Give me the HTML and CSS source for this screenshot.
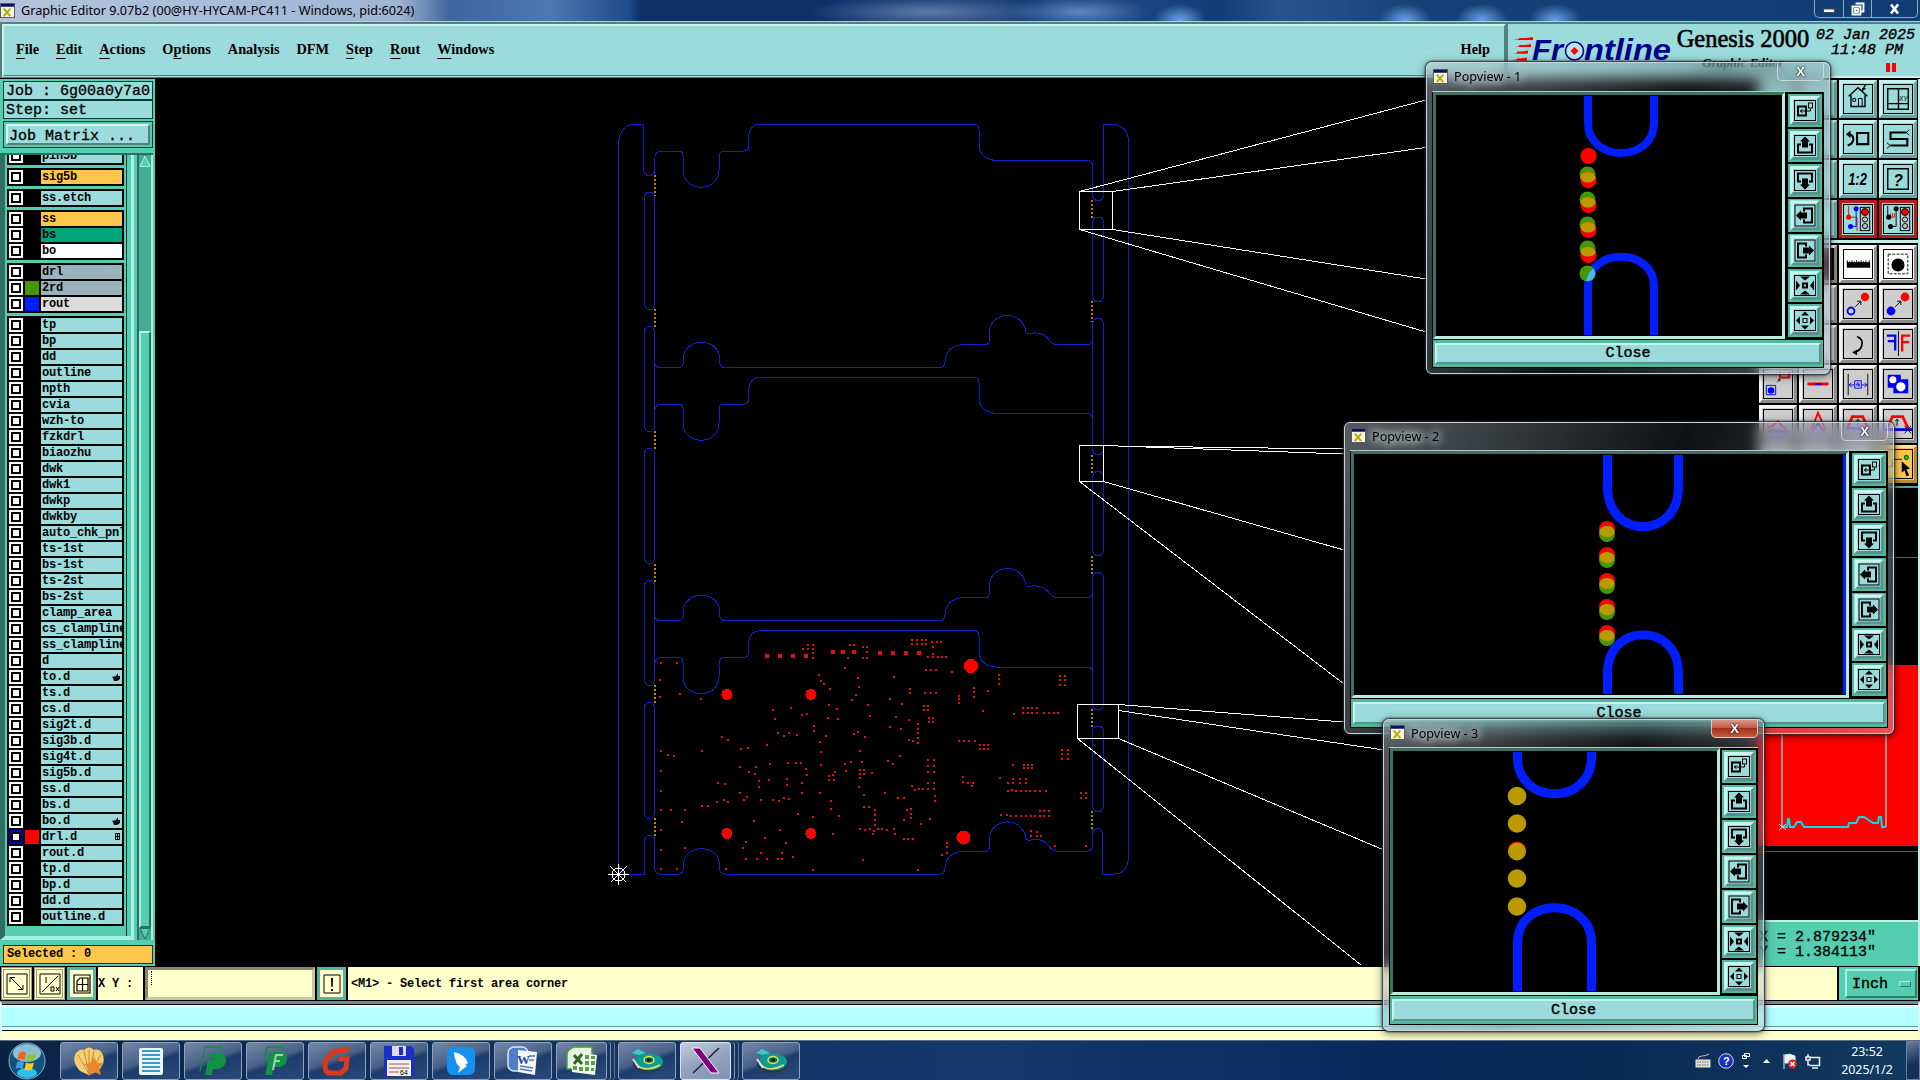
FILE: index.html
```html
<!DOCTYPE html>
<html lang="en">
<head>
  <meta charset="UTF-8">
  <title>Graphic Editor</title>
  <link rel="stylesheet" href="styles.css">
</head>
<body>

  <!-- shared icons -->
  <svg class="defs">
    <symbol id="win-icon" viewBox="0 0 16 16">
      <rect x=".5" y=".5" width="15" height="15" fill="#f4f4e8" stroke="#555"/>
      <rect x="1" y="1" width="14" height="3" fill="#101060"/>
      <path d="M4 6l7 8M11 6l-7 8" stroke="#b5b000" stroke-width="2.2"/>
    </symbol>
    <symbol id="pv-copy" viewBox="0 0 20 20">
      <rect x="3" y="6" width="8" height="9" fill="none" stroke="#000" stroke-width="2"/>
      <rect x="13.5" y="2.5" width="4" height="5" fill="none" stroke="#000"/>
      <path d="M15.5 8v2.500H5M7.500 8.500l-2 2 2 2" fill="none" stroke="#000"/>
    </symbol>
    <symbol id="pv-pan" viewBox="0 0 20 20">
      <path d="M6 9H3v8h14V9h-3" fill="none" stroke="#000" stroke-width="2"/>
      <path d="M10 1l5 5h-2v6H7V6H5z"/>
    </symbol>
    <symbol id="pv-in" viewBox="0 0 20 20">
      <rect x="8" y="8" width="4" height="4" fill="none" stroke="#000" stroke-width="2"/>
      <path d="M5 1h10l-5 4zM5 19h10l-5-4zM1 5v10l4-5zM19 5v10l-4-5z"/>
    </symbol>
    <symbol id="pv-out" viewBox="0 0 20 20">
      <rect x="8" y="8" width="4" height="4" fill="none" stroke="#000"/>
      <path d="M10 1l4 4H6zM10 19l4-4H6zM1 10l4-4v8zM19 10l-4-4v8z"/>
    </symbol>
    <symbol id="disc" viewBox="0 0 34 26">
      <ellipse cx="18" cy="16" rx="15" ry="9" fill="#2c3550"/>
      <ellipse cx="19" cy="14" rx="14" ry="8.500" fill="#0b9c94"/>
      <path d="M6 16q8 9 24 1" fill="none" stroke="#e4e06a" stroke-width="1.500"/>
      <path d="M3 11l6 9" stroke="#ddd" stroke-width="2"/>
      <ellipse cx="19" cy="12" rx="5" ry="3.500" fill="#087070" stroke="#f0e03c" stroke-width="1.500"/>
      <path d="M2 5l6-4 8 4-7 2z" fill="#2fd3c5"/>
      <ellipse cx="19" cy="12" rx="2" ry="1.500" fill="#111"/>
    </symbol>
  </svg>

  <header class="titlebar">
    <svg class="win-icon"><use href="#win-icon"/></svg>
    <span class="title-text">Graphic Editor 9.07b2 (00@HY-HYCAM-PC411 - Windows, pid:6024)</span>
    <div class="win-buttons">
      <span><svg width="14" height="12"><rect x="1.500" y="6" width="11" height="3.500" fill="#fff" stroke="#445"/></svg></span>
      <span><svg width="14" height="14"><path d="M4.500 1.500h8v8h-2M1.500 4.500h8v8h-8z M4 7h3v3h-3z" fill="none" stroke="#fff" stroke-width="1.800"/></svg></span>
      <span class="wide"><svg width="14" height="12"><path d="M3 1.500l7 9M10 1.500l-7 9" stroke="#fff" stroke-width="2.600"/></svg></span>
    </div>
  </header>

  <div class="top">
    <nav class="menubar">
      <span><u>F</u>ile</span>
      <span><u>E</u>dit</span>
      <span><u>A</u>ctions</span>
      <span>O<u>p</u>tions</span>
      <span>Analysis</span>
      <span>DFM</span>
      <span><u>S</u>tep</span>
      <span><u>R</u>out</span>
      <span><u>W</u>indows</span>
      <span class="help">Help</span>
    </nav>
    <div class="brand">
      <svg class="logo" width="164" height="30" viewBox="0 0 164 30">
        <path d="M2 4l20-3-1 3zM4 11l16-3-1 3zM2 17.500l15-3-1 3zM0 24.500l16-3-1 3z" fill="#f00"/>
        <path d="M8 2h14v2H8zM8 9h12v2H8zM6 15.500h11v2H6zM6 22.500h10v2H6z" fill="#f00"/>
        <g class="logo-text">
          <text x="21" y="24" textLength="31" lengthAdjust="spacingAndGlyphs">Fr</text>
          <text x="73" y="24" textLength="87" lengthAdjust="spacingAndGlyphs">ntline</text>
        </g>
        <circle cx="63.500" cy="15" r="9" fill="#b8e4e8" stroke="#00008b" stroke-width="1.500"/>
        <path d="M63.500 11l4 4-4 4-4-4z" fill="#f00"/>
      </svg>
      <div class="product">
        <div class="name">Genesis 2000</div>
        <div class="sub">Graphic Editor</div>
      </div>
      <div class="clock">
        <div>02 Jan 2025</div>
        <div>11:48 PM</div>
        <svg width="12" height="9"><path d="M1 0h4v9H1zM7 0h4v9H7z" fill="#f00"/></svg>
      </div>
    </div>
  </div>

  <div class="main">
    <aside class="sidebar">
      <div class="info">Job : 6g00a0y7a0</div>
      <div class="info">Step: set</div>
      <div class="matrix"><button>Job Matrix ...</button></div>
      <div class="layer-box">
        <div class="layers" id="layers"></div>
        <div class="scroll">
          <svg width="12" height="12"><path d="M1 11.500L6 1l5 10.500z" fill="#54cdb0" stroke="#a8efe0"/></svg>
          <div class="trough"><div class="thumb"></div></div>
          <svg width="12" height="12"><path d="M1 .5L6 11 11 .5z" fill="#54cdb0" stroke="#2b6e62"/></svg>
        </div>
      </div>
      <div class="selected">Selected : 0</div>
    </aside>

    <svg class="canvas" viewBox="155 79 1602 887" width="1602" height="887">
      <defs>
        <!-- top and bottom edges of one board -->
        <g id="board">
          <path d="M654.500 175V160Q655 151 661 151H679Q683 151 683 156V170C683 193 719 193 719 170V158Q719 151 724 151H744Q748.500 151 748.500 146V138Q749 124 762 124H974Q979 124 979 130V148Q983 160 996 160.500H1088Q1092.500 161 1092.500 166V197"/>
          <path d="M654.500 330V361Q655 367.500 660 367.500H679Q683 367.500 683.500 361V358C684 337 719 337 719.500 358V362Q720 367.500 725 367.500H940Q944 367.500 945 362Q946 345 965 344.500H986Q989 344.500 989.500 340V332C990 312 1022 308 1026 332Q1028 335 1033 333Q1044 332 1050 341Q1053 344.500 1056 344.500H1088Q1092.500 344 1092.500 338V322"/>
        </g>
      </defs>
      <g class="rout">
        <use href="#board"/>
        <use href="#board" y="253"/>
        <use href="#board" y="506.500"/>
        <path d="M618.500 860V142Q620.500 124 637 124H643.500V170Q644 175.500 649 175.500T654.500 170"/>
        <path d="M618.500 860Q619 874 628 874H644.500V841Q645 835.500 649.500 835.500T654.500 841V868"/>
        <path d="M1103.500 194V124H1111Q1128.500 126 1128.500 142V858Q1127 874 1114 874H1102.500V834Q1102 828.500 1098 828.500T1092.500 834V845"/>
        <path d="M644.500 304V197Q645 192 649.500 192T654.500 197V304Q654 309.500 649.500 309.500T644.500 304z"/>
        <path d="M644.500 426V332Q645 326.500 649.500 326.500T654.500 332V426Q654 431.500 649.500 431.500T644.500 426z"/>
        <path d="M644.500 558V454Q645 448.500 649.500 448.500T654.500 454V558Q654 563.500 649.500 563.500T644.500 558z"/>
        <path d="M644.500 680V586Q645 580.500 649.500 580.500T654.500 586V680Q654 685.500 649.500 685.500T644.500 680z"/>
        <path d="M644.500 813V708Q645 702.500 649.500 702.500T654.500 708V813Q654 818.500 649.500 818.500T644.500 813z"/>
        <path d="M1092.500 195Q1093 200.500 1098 200.500T1103.500 195"/>
        <path d="M1092.500 296V222Q1093 217 1098 217T1103.500 222V296Q1103 301.500 1098 301.500T1092.500 296z"/>
        <path d="M1092.500 449V324Q1093 318.500 1098 318.500T1103.500 324V449Q1103 454.500 1098 454.500T1092.500 449z"/>
        <path d="M1092.500 550V477Q1093 471.500 1098 471.500T1103.500 477V550Q1103 555.500 1098 555.500T1092.500 550z"/>
        <path d="M1092.500 704V578Q1093 572.500 1098 572.500T1103.500 578V704Q1103 709.500 1098 709.500T1092.500 704z"/>
        <path d="M1092.500 806V731Q1093 726 1098 726T1103.500 731V806Q1103 811.500 1098 811.500T1092.500 806z"/>
      </g>
      <g class="tabs">
        <path class="mix" d="M655 175v21M655 309v20M1092 200v20M1092 301v21"/>
        <path class="gold" d="M655 431v18M655 564v18M1092 455v18M1092 556v19M655 685v18M655 818v18M1092 709v18M1092 811v18"/>
      </g>
      <g class="drill">
        <path id="drills"/>
        <path class="pads" d="M767 656h.1M780 656h.1M793 656h.1M806 656h.1M832.500 652h.1M842.500 652h.1M853.500 652h.1M880 653h.1M893 653h.1M906 653h.1M919 653h.1"/>
        <circle cx="727" cy="694.500" r="5.500"/>
        <circle cx="811" cy="694.500" r="5.500"/>
        <circle cx="971" cy="666" r="7"/>
        <circle cx="727" cy="833.500" r="5.500"/>
        <circle cx="811" cy="833.500" r="5.500"/>
        <circle cx="963.500" cy="837.500" r="7"/>
      </g>
      <g class="callout">
        <path d="M1079.500 191.500h33v38h-33zM1079.500 191.500L1426 100M1112.500 191.500L1426 147.500M1112.500 229.500L1426 279M1079.500 229.500L1426 332"/>
        <path d="M1079.500 445.500h24v36h-24zM1079.500 445.500L1344 449M1103.500 445.500L1344 454M1103.500 481.500L1344 550M1079.500 481.500L1344 684"/>
        <path d="M1077.500 704.500h41v34h-41zM1077.500 704.500H1118.500L1344 722M1118.500 710.500L1384 750M1118.500 738.500L1384 850M1077.500 738.500L1361 965"/>
      </g>
      <g class="origin">
        <circle cx="618.500" cy="874.500" r="6.500"/>
        <path d="M608 874.500h21M618.500 864v21M610.500 866.500l16 16M626.500 866.500l-16 16"/>
      </g>
    </svg>

    <aside class="right">
      <div class="tools">
        <i></i><i></i>
        <i><svg viewBox="0 0 30 30"><path d="M5 12L15 3l10 9M7.500 11v12h15V11M20 7V4h3M21 3l2-3" fill="none" stroke="#000" stroke-width="1.500"/><path d="M9.500 14.500h3v3h-3zM15.500 23v-8.500h4V23" fill="none" stroke="#000"/></svg></i>
        <i><svg viewBox="0 0 30 30"><path d="M4 4h22v22H4zM15.500 4v22M4 20h22" fill="none" stroke="#000" stroke-width="1.500"/><text x="16" y="17" font-size="7">XY</text></svg></i>
        <i></i><i></i>
        <i><svg viewBox="0 0 30 30"><path d="M4 10q6 0 6 5t-6 7M14 8.500h12v12H14z" fill="none" stroke="#000" stroke-width="2.200"/><path d="M2 10l5-4v8z"/></svg></i>
        <i><svg viewBox="0 0 30 30"><path d="M24 8H7v7h18v7H7" fill="none" stroke="#000" stroke-width="2.200"/><path d="M24 8l3-3M24 8l3 3M7 22l-4-3M7 22l-4 3" stroke="#000"/></svg></i>
        <i></i><i></i>
        <i><svg viewBox="0 0 30 30"><text class="big" x="4.500" y="21" textLength="20" lengthAdjust="spacingAndGlyphs">1:2</text></svg></i>
        <i><svg viewBox="0 0 30 30"><path d="M4 4h22v22H4z" fill="none" stroke="#000" stroke-width="1.500"/><text class="big" x="10" y="22">?</text></svg></i>
        <i></i><i></i>
        <i class="red"><svg viewBox="0 0 30 30"><path d="M5 1v12h9v15" fill="none" stroke="#f00"/><path d="M13 4v19H7" fill="none" stroke="#00f"/><circle cx="5" cy="13" r="2.700" fill="#f00"/><circle cx="13" cy="4" r="2.700" fill="#00f"/><circle cx="7" cy="23" r="2.700" fill="#00f"/><rect x="17.500" y="2.500" width="10" height="25" fill="#b5c8ca" stroke="#000"/><circle cx="22.500" cy="7.500" r="3.700" fill="#f00" stroke="#000"/><circle cx="22.500" cy="15.500" r="2.700" fill="none" stroke="#000"/><circle cx="22.500" cy="22.500" r="2.700" fill="none" stroke="#000"/></svg></i>
        <i class="red"><svg viewBox="0 0 30 30"><path d="M4 1v12M13 4v19H7" fill="none" stroke="#000"/><path d="M5 13h6V9M7 13V9M9 13V9" fill="none" stroke="#f00"/><circle cx="5" cy="13" r="2.700"/><circle cx="13" cy="4" r="2.700"/><circle cx="7" cy="23" r="2.700"/><rect x="17.500" y="2.500" width="10" height="25" fill="#b5c8ca" stroke="#000"/><circle cx="22.500" cy="7.500" r="3.700" fill="#f00" stroke="#000"/><circle cx="22.500" cy="15.500" r="2.700" fill="none" stroke="#000"/><circle cx="22.500" cy="22.500" r="2.700" fill="none" stroke="#000"/></svg></i>
      </div>
      <div class="tools grey">
        <i></i><i class="dark"></i>
        <i class="white"><svg viewBox="0 0 30 30"><path d="M3 13h25v6H3z"/><path d="M3.500 14v-3M6 14v-2M8.500 14v-3M11 14v-2M13.500 14v-3M16 14v-2M18.500 14v-3M21 14v-2M23.500 14v-3M27 14v-3" stroke="#000"/></svg></i>
        <i class="white"><svg viewBox="0 0 30 30"><rect x="4.500" y="4.500" width="21" height="21" fill="none" stroke="#000" stroke-dasharray="3 1.500"/><circle cx="15" cy="16" r="7"/></svg></i>
        <i></i><i></i>
        <i><svg viewBox="0 0 30 30"><circle cx="7.500" cy="22.500" r="3.700" fill="none" stroke="#00f" stroke-width="2"/><path d="M12 18l6-6M14 12h4v4" fill="none" stroke="#000"/><circle cx="22.500" cy="7.500" r="4.500" fill="#f00"/></svg></i>
        <i><svg viewBox="0 0 30 30"><circle cx="7.500" cy="22.500" r="4.700" fill="#00f"/><path d="M12 18l6-6M14 12h4v4" fill="none" stroke="#000"/><circle cx="22.500" cy="7.500" r="4.700" fill="#f00"/></svg></i>
        <i></i><i></i>
        <i><svg viewBox="0 0 30 30"><path d="M14 7q7 3 5 10-2 6-9 7" fill="none" stroke="#000" stroke-width="1.800"/><path d="M9 24l5-3v6z"/></svg></i>
        <i><svg viewBox="0 0 30 30"><path d="M3 7h9v16M4 13h8" fill="none" stroke="#00f" stroke-width="2.500" transform="translate(0 -1)"/><path d="M15.500 1v27" stroke="#000"/><path d="M28 6H19.500v17M27 13h-7" fill="none" stroke="#f00" stroke-width="2.500"/></svg></i>
        <i><svg viewBox="0 0 30 30"><path d="M17 2v6h10V2" fill="none" stroke="#f00" stroke-width="2"/><path d="M2.500 16.500h10v10h-10z" fill="none" stroke="#00f"/><circle cx="7.500" cy="22" r="3.500" fill="#00f"/><path d="M14 13l3-3M15 10h2v2" fill="none" stroke="#000"/></svg></i>
        <i><svg viewBox="0 0 30 30"><path d="M5 15h20" stroke="#f00" stroke-width="3" stroke-linecap="round"/><path d="M12 15h6" stroke="#00f" stroke-width="2"/></svg></i>
        <i><svg viewBox="0 0 30 30"><path d="M4.500 4v23M25.500 4v23" stroke="#000"/><path d="M11.500 11.500h7v8h-7zM15 13l-2 3h4M16 14v4M11 16H6M8 13.500L5.500 16 8 18.500M19 16h5M22 13.500l2.500 2.500-2.500 2.500" fill="none" stroke="#00f"/></svg></i>
        <i><svg viewBox="0 0 30 30"><path d="M4 5h14v5h8v15H10v-6H4z" fill="#00f"/><circle cx="9.500" cy="10.500" r="3.800" fill="#fff"/><circle cx="18" cy="18" r="5" fill="#fff"/></svg></i>
        <i><svg viewBox="0 0 30 30"><path d="M4 19l5-2 6-5 5 6 4 2" fill="none" stroke="#f00" stroke-width="2"/><path d="M4 23h22" stroke="#00f" stroke-width="3"/></svg></i>
        <i><svg viewBox="0 0 30 30"><path d="M7 22l5-11 3-8 4 9 4 10" fill="none" stroke="#f00" stroke-width="2"/><path d="M6 27l9-13 9 13" fill="none" stroke="#00f" stroke-width="2"/></svg></i>
        <i><svg viewBox="0 0 30 30"><path d="M4 18l5-11h11l5 11" fill="none" stroke="#f00" stroke-width="3"/><path d="M2 20h26" stroke="#00f" stroke-width="3"/><path d="M15 17v-7M13 12l2-2 2 2" fill="none" stroke="#000"/></svg></i>
        <i><svg viewBox="0 0 30 30"><path d="M4 18l5-11h11l6 13" fill="none" stroke="#f00" stroke-width="3"/><path d="M0 21h30" stroke="#00f" stroke-width="3"/><path d="M14 17v-7M12 12l2-2 2 2M22 17l7 8M29 17l-7 8" fill="none" stroke="#000"/></svg></i>
        <i></i><i></i><i></i>
        <i class="yellow"><svg viewBox="0 0 30 30"><path d="M0 20V18h9V10h10" fill="none" stroke="#000"/><circle cx="24" cy="8" r="2.300" fill="#1c1" stroke="#040"/><path d="M19 12l9 8-4 1 3 6-3 1-2-6-3 2z"/></svg></i>
      </div>
      <svg class="overview" viewBox="1757 488 161 432" width="161" height="432">
        <rect x="1757" y="488" width="161" height="432" fill="#000"/>
        <path d="M1757 557.500h161M1757 851.500h161" stroke="#3f7a14"/>
        <rect x="1757" y="665" width="161" height="181" fill="#f00"/>
        <path d="M1782 734v93M1886 734v93" stroke="#999" stroke-width="2"/>
        <path d="M1783 827h4l1-8h1l1 8h4l3-5h4l3 5h44l1-4h7l3-6h5l9 6h5l1-6h2l1 10h4" fill="none" stroke="#00e0e8" stroke-width="2"/>
        <path d="M1779 824l7 6M1786 824l-7 6" stroke="#ddd"/>
      </svg>
      <div class="coords">
        <div>X = 2.879234"</div>
        <div>Y = 1.384113"</div>
      </div>
    </aside>
  </div>

  <div class="cmdbar">
    <div class="cmd"><svg width="22" height="22"><path d="M1 1h20v20H1zM4.500 4.500l12 12M4 9V4.500h5M17 12v4.500h-5" fill="none" stroke="#000"/></svg></div>
    <div class="cmd"><svg width="22" height="22"><path d="M1 1h20v20H1zM3 19L19 3M7 4v6M12 14h3v4h-3zM17 14l3 4M20 14l-3 4" fill="none" stroke="#000"/></svg></div>
    <div class="cmd on"><svg width="18" height="20"><path d="M1 1h16v18H1zM4 17V7l3-3h8v13zM9.500 4v13M4 10.500h11" fill="none" stroke="#000" stroke-width="1.200"/></svg></div>
    <div class="xy">X Y :</div>
    <div class="xy-input"></div>
    <div class="cmd on"><svg width="18" height="20"><path d="M1 1h16v18H1z" fill="none" stroke="#000"/><path d="M8 4h2l-.3 9H8.300zM8 15h2v2H8z"/></svg></div>
    <div class="message">&lt;M1&gt; - Select first area corner</div>
    <div class="unit"><button>Inch <b></b></button></div>
  </div>
  <div class="statusbar"></div>

  <footer class="taskbar">
    <svg class="orb" width="38" height="38" viewBox="0 0 38 38">
      <circle cx="19" cy="19" r="18" fill="#12507e" stroke="#7fb4d0"/>
      <ellipse cx="19" cy="11" rx="14" ry="9" fill="#8fbdd2"/>
      <ellipse cx="19" cy="31" rx="10" ry="5" fill="#2fc0e8"/>
      <path d="M11 11q4-3 7 0l-1.500 7q-4-2-7 0z" fill="#ee6424"/>
      <path d="M20 11.500q4 2 8 0l-2 7q-4 2-7.500 0z" fill="#8cc63e"/>
      <path d="M9 20q4-2 7 0l-1.500 7q-4-2-7 0z" fill="#3f9ae0"/>
      <path d="M18 20.500q4 2 8 0l-2 7q-4 2-7.500 0z" fill="#fdc52c"/>
    </svg>
    <div class="task"><svg width="34" height="30"><path d="M17 29L8 25Q-1 15 4 7q4-5 8-3 5-5 10 0 5-2 8 3 5 9-4 18z" fill="#f5cd72"/><path d="M17 28L6 9M17 28L12 5M17 28L17 4M17 28l5-23M17 28L29 9" stroke="#c98b32"/><path d="M22 11l3 6 7 0-5 5 2 7-7-3-6 4 1-8-5-4 7-1z" fill="#e8862c"/></svg></div>
    <div class="task"><svg width="26" height="30"><rect x="1" y="2" width="24" height="27" rx="2" fill="#e8f5fb"/><path d="M4 5h18M4 9h18M4 13h18M4 17h18M4 21h18M4 25h18" stroke="#3a9cc4" stroke-width="2"/></svg></div>
    <div class="task"><svg width="32" height="32"><path d="M8 2h16v4M8 2L3 26" fill="none" stroke="#158a40" stroke-width="1.500"/><path d="M13 8h10q7 1 6 9-2 7-10 7h-3l-1 6H8l3-15h6l1-3h-6z" fill="#129245"/></svg></div>
    <div class="task"><svg width="32" height="32"><path d="M8 2h16v4M8 2L4 20" fill="none" stroke="#158a40" stroke-width="1.500"/><path d="M11 7h12q6 1 5 9-2 6-10 6h-3l-2 8H6z" fill="#129245"/><path d="M14 25l3-15h7M15 16h6" fill="none" stroke="#9fd0b0" stroke-width="2"/></svg></div>
    <div class="task"><svg width="32" height="32"><path d="M28 4L12 7 5 15q-3 8 2 13h13l5-5 1-9h-8" fill="none" stroke="#dd3818" stroke-width="5"/></svg></div>
    <div class="task"><svg width="34" height="34"><path d="M2 2h27l3 3v27H2z" fill="#1b2fc4"/><rect x="10" y="2" width="14" height="10" fill="#dcdce4"/><rect x="17" y="3" width="4" height="8" fill="#1b2fc4"/><rect x="5" y="16" width="24" height="16" fill="#f6f0ee"/><path d="M7 20h20M7 24h20M7 28h10" stroke="#a05050"/><text x="18" y="31" font-size="7">64</text></svg></div>
    <div class="task"><svg width="30" height="30"><rect x="1" y="1" width="28" height="28" rx="6" fill="#1590ee"/><path d="M8 6q12 3 14 11l-3 2 2 1-9 7 2-6q-4-3-4-6-2-4-2-9z" fill="#fff"/></svg></div>
    <div class="task"><svg width="32" height="30"><rect x="1" y="1" width="20" height="24" rx="6" fill="#4f7fc8" stroke="#dce8f8" stroke-width="1.500"/><path d="M11 4l19 2-2 23-17-3z" fill="#f2f5fa"/><path d="M13 20l13 2M13 23l12 2M22 10h6M22 14h5" stroke="#5878b0" stroke-width="1.500"/><text class="word" x="10" y="18">W</text></svg></div>
    <div class="task stack"><svg width="32" height="30"><path d="M8 1h18v22H1V9q0-6 7-8z" fill="#e4f2dc" stroke="#4c9a3c" stroke-width="1.500"/><path d="M6 6l25 3-2 20-23-3z" fill="#f2f7ee"/><path d="M19 9h4v4h-4zM25 10h4v3h-4zM19 15h4v4h-4zM25 15h4v4h-4zM19 21h4v4h-4zM25 22h3v3h-3zM7 20h4v4H7zM13 21h4v4h-4z" fill="#5a9e4a"/><path d="M8 9l8 9M16 8l-8 10" stroke="#2c6a24" stroke-width="3"/></svg></div>
    <div class="task"><svg width="34" height="26"><use href="#disc"/></svg></div>
    <div class="task active stack"><svg width="34" height="30"><path d="M30 2L4 27" stroke="#222" stroke-width="1.500"/><path d="M3 2h8l19 25h-8z" fill="#7d0080" stroke="#fff"/></svg></div>
    <div class="task"><svg width="34" height="26"><use href="#disc"/></svg></div>
    <div class="tray">
      <svg width="16" height="16"><path d="M3 6q0-3 4-3t7-2" fill="none" stroke="#bbb"/><rect x=".5" y="6.500" width="15" height="8" rx="1" fill="#ddd" stroke="#888"/><path d="M2 9h12M2 12h12" stroke="#666" stroke-dasharray="1.500 1"/></svg>
      <svg width="16" height="16"><circle cx="8" cy="8" r="7.300" fill="#1a2fc0" stroke="#cdd8f4"/><text x="5" y="12" font-size="11" font-weight="bold" fill="#fff">?</text></svg>
      <svg width="10" height="18"><path d="M3.500 1.500h5v3h-5zM1.500 3.500h4v3h-4z" fill="none" stroke="#fff"/><path d="M2 13h6l-3 3z" fill="#fff"/></svg>
      <svg width="8" height="8"><path d="M0 6h7L3.500 2z" fill="#fff"/></svg>
      <svg width="16" height="18"><path d="M2 2v15M3 3q4-2 10 1v7H3z" fill="#eee" stroke="#eee"/><circle cx="10.500" cy="12" r="4.500" fill="#d42a1c"/><path d="M8.500 10l4 4M12.500 10l-4 4" stroke="#fff" stroke-width="1.500"/></svg>
      <svg width="16" height="16"><path d="M5 4.500h9.500v8H5M7 15h6M3 1v3M1 4h4v3H1zM3 7v5h2" fill="none" stroke="#e8eef4" stroke-width="1.500"/></svg>
    </div>
    <div class="time">
      <div>23:52</div>
      <div>2025/1/2</div>
    </div>
    <div class="show-desktop"></div>
  </footer>

  <section class="popview one">
    <div class="pv-title"><svg class="win-icon"><use href="#win-icon"/></svg><span>Popview - 1</span><b class="pv-x">X</b></div>
    <div class="pv-body">
      <div class="pv-view">
        <svg width="346" height="240" viewBox="1436 95 346 240">
          <path class="slot" d="M1588 96V123C1588 163 1654 163 1654 123V96M1588 335V286C1588 247 1654 247 1654 286V335"/>
          <g class="g"><circle cx="1587.500" cy="174.500" r="8"/><circle cx="1587.500" cy="199.500" r="8"/><circle cx="1587.500" cy="224.500" r="8"/><circle cx="1587.500" cy="248.500" r="8"/><circle cx="1587.500" cy="273.500" r="8"/></g>
          <g class="r"><circle cx="1588.500" cy="156" r="8"/><circle cx="1588.500" cy="180" r="8"/><circle cx="1588.500" cy="205" r="8"/><circle cx="1588.500" cy="230" r="8"/><circle cx="1588.500" cy="255" r="8"/></g>
          <g class="y"><ellipse cx="1588" cy="177.300" rx="7.500" ry="5.200"/><ellipse cx="1588" cy="202.300" rx="7.500" ry="5.200"/><ellipse cx="1588" cy="227.300" rx="7.500" ry="5.200"/><ellipse cx="1588" cy="251.800" rx="7.500" ry="4.800"/></g>
          <path d="M1586 281q2-8 7-12.500 4 5 1 9-3 4-8 3.500z" fill="#45baff"/>
        </svg>
      </div>
      <div class="pv-tools"><i><svg><use href="#pv-copy"/></svg></i><i><svg><use href="#pv-pan"/></svg></i><i><svg class="down"><use href="#pv-pan"/></svg></i><i><svg class="left"><use href="#pv-pan"/></svg></i><i><svg class="rt"><use href="#pv-pan"/></svg></i><i><svg><use href="#pv-in"/></svg></i><i><svg><use href="#pv-out"/></svg></i></div>
    </div>
    <div class="pv-close"><button>Close</button></div>
  </section>

  <section class="popview two">
    <div class="pv-title"><svg class="win-icon"><use href="#win-icon"/></svg><span>Popview - 2</span><b class="pv-x">X</b></div>
    <div class="pv-body">
      <div class="pv-view">
        <svg width="492" height="240" viewBox="1354 454 492 240">
          <path class="slot s9" d="M1607.500 455V487C1607.500 540 1678.500 540 1678.500 487V455M1607.500 694V673C1607.500 622 1678.500 622 1678.500 673V694"/>
          <path d="M1843 455h3v239h-3z" fill="#001eff"/>
          <g class="r"><circle cx="1607" cy="529" r="8"/><circle cx="1607" cy="555" r="8"/><circle cx="1607" cy="581" r="8"/><circle cx="1607" cy="607" r="8"/><circle cx="1607" cy="633" r="8"/></g>
          <g class="g"><circle cx="1607" cy="534" r="8"/><circle cx="1607" cy="560" r="8"/><circle cx="1607" cy="586" r="8"/><circle cx="1607" cy="612" r="8"/><circle cx="1607" cy="638" r="8"/></g>
          <g class="y"><ellipse cx="1607" cy="531.500" rx="7.500" ry="5.500"/><ellipse cx="1607" cy="557.500" rx="7.500" ry="5.500"/><ellipse cx="1607" cy="583.500" rx="7.500" ry="5.500"/><ellipse cx="1607" cy="609.500" rx="7.500" ry="5.500"/><ellipse cx="1607" cy="635.500" rx="7.500" ry="5.500"/></g>
        </svg>
      </div>
      <div class="pv-tools"><i><svg><use href="#pv-copy"/></svg></i><i><svg><use href="#pv-pan"/></svg></i><i><svg class="down"><use href="#pv-pan"/></svg></i><i><svg class="left"><use href="#pv-pan"/></svg></i><i><svg class="rt"><use href="#pv-pan"/></svg></i><i><svg><use href="#pv-in"/></svg></i><i><svg><use href="#pv-out"/></svg></i></div>
    </div>
    <div class="pv-close"><button>Close</button></div>
  </section>

  <section class="popview three">
    <div class="pv-title"><svg class="win-icon"><use href="#win-icon"/></svg><span>Popview - 3</span><b class="pv-x">X</b></div>
    <div class="pv-body">
      <div class="pv-view">
        <svg width="324" height="240" viewBox="1393 751 324 240">
          <path class="slot s9" d="M1517.500 752V757C1517.500 806 1591.500 806 1591.500 757V752M1517.500 991V943C1517.500 896 1591.500 896 1591.500 943V991"/>
          <circle cx="1517" cy="850.500" r="9" fill="#f00"/>
          <g class="y"><circle cx="1517" cy="796" r="9.300"/><circle cx="1517" cy="823.500" r="9.300"/><circle cx="1517" cy="851.500" r="9"/><circle cx="1517" cy="878.500" r="9.300"/><circle cx="1517" cy="906.500" r="9.300"/></g>
        </svg>
      </div>
      <div class="pv-tools"><i><svg><use href="#pv-copy"/></svg></i><i><svg><use href="#pv-pan"/></svg></i><i><svg class="down"><use href="#pv-pan"/></svg></i><i><svg class="left"><use href="#pv-pan"/></svg></i><i><svg class="rt"><use href="#pv-pan"/></svg></i><i><svg><use href="#pv-in"/></svg></i><i><svg><use href="#pv-out"/></svg></i></div>
    </div>
    <div class="pv-close"><button>Close</button></div>
  </section>

  <script src="script.js"></script>
</body>
</html>
```

FILE: styles.css
```css
*,
*::before {
  box-sizing: border-box;
}

body {
  margin: 0;
  width: 1920px;
  height: 1080px;
  overflow: hidden;
  display: flex;
  flex-direction: column;
  background: #000;
  font-family: "Liberation Mono", monospace;
  color: #000;
  position: relative;
}

svg {
  display: block;
  flex: none;
}

button {
  font: inherit;
  color: inherit;
  border-radius: 0;
  padding: 0;
}

.defs {
  position: absolute;
  width: 0;
  height: 0;
}

.win-icon {
  width: 15px;
  height: 15px;
}

/* Title bar */
.titlebar {
  height: 22px;
  display: flex;
  align-items: center;
  gap: 6px;
  padding-bottom: 1px;
  background:
    radial-gradient(ellipse 26px 16px at 1180px 20px, #6aa2e4, transparent),
    radial-gradient(ellipse 26px 16px at 1405px 20px, #6aa2e4, transparent),
    radial-gradient(ellipse 26px 16px at 1482px 20px, #6aa2e4, transparent),
    radial-gradient(ellipse 26px 16px at 1555px 20px, #6aa2e4, transparent),
    radial-gradient(ellipse 120px 16px at 930px 12px, #5d7ba6, transparent),
    radial-gradient(ellipse 70px 16px at 1080px 12px, #5d87bf, transparent),
    linear-gradient(90deg, #b3c3dc 0, #a5b9d8 300px, #9fb3d3 400px, #3c659c 450px, #4d78b0 550px, #1d4a88 630px, #0c3168 640px, #0c3168 800px, #1b4580 1150px, #123c76 1220px, #28548e 1280px, #164078 1420px, #123c74);
  border-bottom: 1px solid #bac9da;
}

.title-text,
.pv-title span {
  font-family: "Noto Sans", sans-serif;
  font-size: 12.65px;
  line-height: 16px;
  white-space: nowrap;
}

.win-buttons {
  margin-left: auto;
  margin-right: 2px;
  align-self: flex-start;
  display: flex;
  height: 18px;
  border: 1px solid #8fa5c4;
  border-top: none;
  border-radius: 0 0 5px 5px;
}

.win-buttons span {
  width: 28px;
  display: flex;
  justify-content: center;
  align-items: center;
}

.win-buttons span + span {
  border-left: 1px solid #8fa5c4;
}

.win-buttons .wide {
  width: 46px;
}

/* Menu and brand */
.top {
  display: flex;
  height: 57px;
  background: #54807e;
  padding-top: 2px;
  border-bottom: 1px solid #000;
}

.menubar {
  width: 1504px;
  display: flex;
  align-items: center;
  gap: 17px;
  padding: 0 14px 2px 12px;
  margin-left: 2px;
  background: #9cdbdb;
  border: 2px solid #c9f2f0;
  border-right-color: #54807e;
  border-bottom: 3px double #54807e;
  font: bold 14.3px "Liberation Serif", serif;
}

.menubar u {
  text-underline-offset: 4px;
}

.menubar .help {
  margin-left: auto;
}

.brand {
  flex: 1;
  display: flex;
  background: #9cdbdb;
  margin-left: 2px;
  padding-left: 3px;
  border-bottom: 2px solid #c9f2f0;
}

.logo {
  margin-top: 12px;
  overflow: visible;
}

.logo-text {
  font: italic bold 30px "Liberation Sans", sans-serif;
  fill: #00008b;
}

.product {
  width: 136px;
  font-family: "Liberation Serif", serif;
  text-align: center;
  white-space: nowrap;
}

.product .name {
  font-size: 24.5px;
  line-height: 30px;
  -webkit-text-stroke: .6px #000;
}

.product .sub {
  font: italic bold 13px/18px "Liberation Serif", serif;
}

.clock {
  width: 102px;
  margin-left: 5px;
  padding-top: 4px;
  font-style: italic;
  font-size: 15px;
  line-height: 15px;
  -webkit-text-stroke: .4px #000;
  white-space: nowrap;
}

.clock div + div {
  padding-left: 15px;
}

.clock svg {
  margin: 5px 0 0 69px;
}

/* Sidebar */
.main {
  display: flex;
  height: 887px;
}

.sidebar {
  width: 155px;
  background: #54cdb0;
  padding: 2px 2px 0 3px;
  display: flex;
  flex-direction: column;
  overflow: hidden;
}

.info,
.matrix {
  height: 19px;
  border: 1px solid #0b3a30;
  background: #9cdbdb;
  font-size: 15px;
  line-height: 19px;
  padding-left: 2px;
  white-space: pre;
  -webkit-text-stroke: .3px #000;
}

.matrix {
  height: 27px;
  margin-top: 2px;
  padding: 2px;
  background: #54cdb0;
}

.matrix button {
  width: 100%;
  height: 21px;
  padding: 1px 0 0 1px;
  text-align: left;
  background: #9cdbdb;
  border: 2px solid;
  border-color: #d4f6f4 #54807e #54807e #d4f6f4;
}

.layer-box {
  display: flex;
  height: 787px;
  margin: 5px 0 5px -3px;
  border-top: 2px solid #2b6e62;
}

.layers {
  width: 134px;
  flex: none;
  border-left: 5px solid #2f6e62;
  border-bottom: 4px solid #a8efe0;
  border-right: 3px solid #a8efe0;
  overflow: hidden;
  padding: 0 4px 0 2px;
  background: linear-gradient(90deg, transparent 121px, #0b3a30 121px, #0b3a30 122px, transparent 122px);
}

.group {
  width: 117px;
  background: #000;
  padding: 2px;
  display: grid;
  grid-template-columns: minmax(0, 1fr);
  gap: 2px;
  margin-bottom: 3px;
}

.group:first-child {
  margin-top: -8px;
}

.row {
  display: flex;
  gap: 2px;
  height: 14px;
}

.box {
  width: 14px;
  flex: none;
  background: #fff;
  padding: 2px;
}

.box::before {
  content: "";
  display: block;
  height: 10px;
  background: #fff;
  border: 2px solid #000;
}

.box.on {
  background: #0000b0;
}

.swatch {
  width: 14px;
  flex: none;
}

.label {
  flex: 1;
  min-width: 0;
  display: flex;
  overflow: hidden;
  background: #9cdbdb;
  font: bold 12px/15px "Liberation Mono", monospace;
  letter-spacing: -.2px;
  padding-left: 1px;
}

.label svg {
  margin: 3px 2px 0 auto;
}

.scroll {
  width: 18px;
  margin-left: 3px;
  border-left: 2px solid #2b6e62;
  border-right: 2px solid #a8efe0;
  background: #48ab96;
  display: flex;
  flex-direction: column;
  align-items: center;
}

.trough {
  flex: 1;
  width: 12px;
  padding-top: 164px;
}

.thumb {
  height: 100%;
  background: #54cdb0;
  border: 2px solid;
  border-color: #c0f5ea #2b6e62 #2b6e62 #a8efe0;
}

.selected {
  height: 19px;
  border: 1px solid #3a2a00;
  background: #ffc64d;
  font: bold 12px/17px "Liberation Mono", monospace;
  letter-spacing: -.2px;
  padding-left: 3px;
}

/* Drawing area */
.canvas {
  background: #000;
  shape-rendering: crispEdges;
}

.rout {
  fill: none;
  stroke: #0c20cc;
  stroke-width: 1;
}

.tabs path {
  fill: none;
  stroke-width: 2;
  stroke-dasharray: 2 2;
}

.tabs .mix {
  stroke: #c07818;
}

.tabs .gold {
  stroke: #a88c18;
}

.drill {
  fill: #f00;
  stroke: none;
}

.drill path {
  stroke: #e01010;
  stroke-width: 2;
  stroke-linecap: square;
}

.drill .pads {
  stroke-width: 4;
}

.callout,
.origin {
  fill: none;
  stroke: #fff;
}

/* Right column */
.right {
  width: 163px;
  border-right: 2px solid #c4efe6;
  background: #000;
}

.tools {
  display: grid;
  grid-template-columns: repeat(4, 38px);
  grid-auto-rows: 38px;
  gap: 2px;
  padding: 1px 1px 1px 2px;
  height: 164px;
  border-bottom: 3px solid #c4efe6;
}

.tools.grey {
  height: 245px;
  padding-top: 2px;
  border-bottom: 2px solid #54a090;
}

.tools i {
  padding: 1px;
  background: #9cdbdb;
  border: 3px solid;
  border-color: #c4f2f0 #6fa3a3 #6fa3a3 #c4f2f0;
}

.tools svg {
  width: 30px;
  height: 30px;
  border: 1px solid #000;
  font-family: "Liberation Sans", sans-serif;
}

.tools .big {
  font-size: 17px;
  font-weight: bold;
}

.tools .red {
  border-color: #b81c1c;
}

.tools.grey i {
  background: #cdcdcd;
  border-color: #f4f4f4 #8c8c8c #8c8c8c #f4f4f4;
}

.tools.grey .white {
  background: #fff;
}

.tools.grey .dark {
  background: #200;
}

.tools.grey .yellow {
  background: #ffc64d;
  border-color: #ffe29a #b98a2c #b98a2c #ffe29a;
}

.coords {
  height: 46px;
  border-top: 2px solid #c4efe6;
  background: #54cdb0;
  font-size: 15px;
  line-height: 15px;
  padding: 8px 0 0 2px;
  -webkit-text-stroke: .3px #000;
}

/* Command line */
.cmdbar {
  display: flex;
  height: 35px;
  padding: 1px 2px 1px 1px;
  background: #000;
  gap: 2px;
  font: bold 12px "Liberation Mono", monospace;
  letter-spacing: -.2px;
}

.cmd {
  width: 31px;
  display: flex;
  justify-content: center;
  align-items: center;
  background: #ffffcc;
  border: 3px double #9a9a70;
}

.cmd.on {
  width: 29px;
  background: #ffffcc;
  border: 3px solid #54b69c;
}

.xy {
  width: 45px;
  background: #ffffcc;
  line-height: 34px;
}

.xy-input {
  width: 170px;
  background: #ffffcc;
  border: 3px solid;
  border-color: #87876a #c8c8a0 #c8c8a0 #87876a;
}

.xy-input::before {
  content: "";
  display: block;
  margin: 1px 0 0 3px;
  height: 14px;
  border-left: 1px dotted #000;
}

.message {
  flex: 1;
  background: #ffffcc;
  line-height: 34px;
  padding-left: 3px;
}

.unit {
  width: 79px;
  background: #54cdb0;
  padding: 2px 1px 2px 6px;
}

.unit button {
  width: 72px;
  height: 29px;
  display: flex;
  align-items: center;
  justify-content: space-between;
  padding: 1px 4px 0 5px;
  background: #54cdb0;
  border: 2px solid;
  border-color: #a8efe0 #2b7e6c #2b7e6c #a8efe0;
  font-weight: normal;
  font-size: 15px;
  letter-spacing: 0;
  -webkit-text-stroke: .4px #000;
}

.unit b {
  width: 12px;
  height: 6px;
  border: 1px solid;
  border-color: #a8efe0 #2b7e6c #2b7e6c #a8efe0;
}

.statusbar {
  height: 39px;
  background: #b3ffff;
  border: 2px solid #d9ffff;
  border-top: 3px solid #708c8c;
  border-bottom: 9px solid #ffffcc;
  box-shadow: inset 0 -1px #000, inset 0 -4px #d9ffff, inset 0 -5px #5fa0a0, inset 0 1px #000, inset 0 4px #d9ffff;
}

/* Taskbar */
.taskbar {
  height: 40px;
  display: flex;
  align-items: center;
  gap: 4px;
  padding-left: 8px;
  background: linear-gradient(90deg, #0a2244 0, #12305c 400px, #14386c 1000px, #08295a 1400px, #0a2a56 1600px, #123a60);
  border-top: 1px solid #5b6f80;
}

.orb {
  margin-right: 10px;
}

.task {
  width: 58px;
  height: 38px;
  display: flex;
  align-items: center;
  justify-content: center;
  border: 1px solid #8ea2bd;
  border-radius: 3px;
  background: linear-gradient(160deg, #7387a6 0, #4a6288 45%, #1d3c6c 55%, #2b4b7a);
}

.task text {
  font-family: "Liberation Sans", sans-serif;
}

.task .word {
  font: bold 13px "Liberation Serif", serif;
  fill: #1f4a96;
}

.task.active {
  width: 51px;
  background: linear-gradient(160deg, #c3cddd, #93a3c0 50%, #8093b4);
  border-color: #dde4ee;
}

.task.stack {
  width: 51px;
  margin-right: 7px;
  box-shadow: 3px 0 #17345f, 4px 0 #7f93b0, 7px 0 #17345f, 8px 0 #5f7593;
}

.tray {
  margin-left: auto;
  margin-right: 7px;
  display: flex;
  align-items: center;
  gap: 7px;
}

.tray text {
  font-family: "Liberation Sans", sans-serif;
}

.tray svg:nth-child(4) {
  margin-left: 5px;
}

.tray svg:nth-child(5) {
  margin-left: 4px;
}

.time {
  width: 70px;
  text-align: center;
  color: #fff;
  font: 12.4px/18px "Noto Sans", sans-serif;
}

.show-desktop {
  width: 14px;
  height: 39px;
  border: 1px solid #6b7f9c;
  background: linear-gradient(160deg, #6a7c96, #14305a 60%);
}

/* Popview windows */
.popview {
  position: absolute;
  display: flex;
  flex-direction: column;
  padding: 0 5px 5px;
  border: 1px solid #c4d4de;
  border-radius: 6px;
  background: linear-gradient(115deg, rgba(190, 205, 215, .45), rgba(60, 70, 80, .25) 50%, rgba(190, 205, 220, .4));
  backdrop-filter: blur(7px);
  box-shadow: 0 0 2px 1px #222, 0 2px 10px rgba(0, 0, 0, .6);
}

.popview.one {
  left: 1426px;
  top: 62px;
  width: 404px;
  height: 312px;
}

.popview.two {
  left: 1344px;
  top: 422px;
  width: 550px;
  height: 312px;
}

.popview.three {
  left: 1383px;
  top: 719px;
  width: 381px;
  height: 312px;
}

.pv-title {
  height: 28px;
  display: flex;
  align-items: center;
  gap: 6px;
  padding: 0 0 2px 1px;
  flex: none;
}

.two .pv-title,
.three .pv-title {
  height: 27px;
}

.pv-title span {
  text-shadow: 0 0 8px #bcc4c8, 0 0 8px #bcc4c8, 0 0 10px #bcc4c8, 0 0 12px #bcc4c8;
}

.pv-x {
  align-self: flex-start;
  margin-left: auto;
  width: 47px;
  height: 18px;
  border: 1px solid rgba(215, 225, 232, .8);
  border-top: none;
  border-radius: 0 0 5px 5px;
  text-align: center;
  font: bold 13px/18px "Liberation Sans", sans-serif;
  color: #fff;
  text-shadow: 0 0 2px #222, 0 0 2px #222;
}

.three .pv-x {
  background: linear-gradient(#d99a8c, #c25a48 45%, #a82f1a 50%, #c65a40);
}

.pv-body {
  display: flex;
  justify-content: space-between;
  height: 248px;
  padding: 0 2px 0 1px;
  background: #000;
  border-top: 1px solid #b5c4c8;
}

.pv-view {
  height: 247px;
  border: 3px solid;
  border-color: #3d7164 #b8ece0 #b8ece0 #3d7164;
  background: #000;
}

.pv-tools {
  display: flex;
  flex-direction: column;
  gap: 2px;
  padding-top: 2px;
  width: 34px;
}

.pv-tools i {
  height: 33px;
  padding: 2px;
  background: #54b69c;
}

.pv-tools svg {
  width: 30px;
  height: 29px;
  padding: 1.5px;
  background: #9cdbdb;
  border: 3px solid;
  border-color: #c4f7ef #58928c #58928c #c4f7ef;
  outline: 1px solid #000;
  outline-offset: -5px;
}

.pv-tools .down {
  transform: rotate(180deg);
  border-color: #58928c #c4f7ef #c4f7ef #58928c;
}

.pv-tools .left {
  transform: rotate(-90deg);
  border-color: #c4f7ef #c4f7ef #58928c #58928c;
}

.pv-tools .rt {
  transform: rotate(90deg);
  border-color: #58928c #58928c #c4f7ef #c4f7ef;
}

.pv-close {
  flex: 1;
  padding: 3px 2px;
  background: #54b69c;
  border: 1px solid #000;
}

.pv-close button {
  width: 100%;
  height: 100%;
  background: #9cdbdb;
  border: 2px solid;
  border-color: #c4f7ef #58928c #58928c #c4f7ef;
  font-size: 15px;
  -webkit-text-stroke: .4px #000;
}

.slot {
  fill: none;
  stroke: #001eff;
  stroke-width: 8;
}

.s9 {
  stroke-width: 9;
}

.r {
  fill: #f00;
}

.g {
  fill: #449900;
}

.y {
  fill: #bb9900;
}
```

FILE: script.js
```js
// Layer list, one array per block: name, background, swatch
const orange = "#ffc64d";
const groups = [
  [["pin5b"]],
  [["sig5b", orange]],
  [["ss.etch"]],
  [["ss", orange], ["bs", "#00a57c"], ["bo", "#fff"]],
  [["drl", "#9ab4bd"], ["2rd", "#9ab4bd", "#449900"], ["rout", "#dcdcdc", "#001eff"]],
  ["tp", "bp", "dd", "outline", "npth", "cvia", "wzh-to", "fzkdrl", "biaozhu", "dwk", "dwk1", "dwkp", "dwkby",
   "auto_chk_pnl", "ts-1st", "bs-1st", "ts-2st", "bs-2st", "clamp_area", "cs_clampline", "ss_clampline", "d",
   "to.d", "ts.d", "cs.d", "sig2t.d", "sig3b.d", "sig4t.d", "sig5b.d", "ss.d", "bs.d", "bo.d", "drl.d",
   "rout.d", "tp.d", "bp.d", "dd.d", "outline.d"].map(n => [n])
];
const hand = '<svg width="8" height="8"><path d="M0 4l4-1 2-3v3h2v3l-3 2H2L1 5z"/></svg>';
const grid = '<svg width="5" height="7"><path d="M.5.5h4v6h-4zM2.500 0v7M0 3.500h5" fill="none" stroke="#000"/></svg>';

let html = "";
groups.forEach(group => {
  html += '<div class="group">';
  group.forEach(([name, bg, swatch]) => {
    const active = name === "drl.d";
    let mark = "";
    if (name === "to.d" || name === "bo.d") mark = hand;
    if (active) mark = grid;
    html += `<div class="row"><div class="box${active ? " on" : ""}"></div>` +
      `<div class="swatch" style="background:${active ? "#f00" : swatch || "#000"}"></div>` +
      `<div class="label" style="background:${bg || "#9cdbdb"}">${name}${mark}</div></div>`;
  });
  html += "</div>";
});
document.getElementById("layers").innerHTML = html;

// Drill holes of the lower board
const holes = `160,189 202,189 157,240 209,282 157,291 264,297 160,453 178,465 194,468 266,453 160,513 160,573 160,630
185,630 222,630 214,666 160,690 160,750 222,744 160,807 202,807 330,807 556,810 831,810 687,780 319,411 334,420
368,447 386,444 436,435 452,330 457,357 500,324 528,345 541,342 465,399 480,408 494,399 515,405 559,378 559,393
575,426 577,456 577,495 590,408 599,315 619,327 596,354 622,357 573,225 578,243 586,252 601,267 640,204 674,234
676,261 669,285 659,300 700,315 705,348 664,402 674,396 692,411 679,453 685,486 656,486 640,492 768,231 757,297
789,312 773,351 807,360 757,381 786,387 808,420 818,423 783,468 752,483 766,492 710,519 530,147 543,135 556,135
543,147 556,147 556,159 556,174 653,135 664,135 648,174 687,141 698,141 698,156 687,174 698,174 815,120 828,120
841,120 852,120 815,132 828,132 841,132 852,132 867,126 880,126 892,126 870,141 870,162 857,171 870,171 883,171
894,171 905,171 852,210 865,210 878,210 920,216 810,267 810,279 849,279 865,279 878,279 846,318 857,318 846,330
857,330 860,354 870,354 860,366 870,366 831,372 831,387 831,399 831,414 831,429 938,288 938,297 938,309 978,264
978,276 978,291 1014,273 1001,333 1042,225 1042,237 1042,252 1203,228 1216,228 1203,240 1216,240 1203,255 1216,255
1105,324 1118,324 1130,324 1143,324 1105,339 1118,339 1130,339 1143,339 1082,342 1160,339 1172,339 1185,339
1197,339 938,423 951,423 965,423 980,423 993,435 1004,435 1014,435 993,447 1004,447 1014,447 1208,450 1223,450
1208,462 1223,462 1208,477 1223,477 1079,495 1108,495 1118,495 1130,495 1108,504 1118,504 1130,504 365,501 389,516
407,501 405,522 444,492 415,543 415,561 441,540 491,489 512,489 525,489 538,507 541,525 488,537 488,555 528,549
528,579 575,579 599,528 609,525 614,516 599,540 612,540 643,513 679,510 690,510 679,522 690,522 679,534 309,549
326,552 365,579 384,591 376,600 420,600 452,600 467,603 480,594 494,597 306,606 324,600 334,606 266,618 282,618
517,642 556,651 603,603 603,627 624,648 609,702 403,663 470,690 431,714 381,726 373,744 486,729 420,759 475,759
504,771 381,777 410,777 436,777 465,777 475,777 677,561 690,585 744,579 778,594 794,594 690,621 703,621 718,630
718,645 718,660 718,675 679,687 692,690 705,687 716,693 726,687 737,687 750,690 768,687 771,702 713,702 794,717
805,717 818,717 857,480 872,480 857,498 872,498 857,516 872,516 857,549 872,549 815,558 823,570 834,567 844,567
857,567 872,567 875,588 875,603 802,630 812,627 812,642 812,654 794,660 862,657 839,672 906,729 906,741 906,759
894,765 948,531 948,546 961,549 974,549 972,558 1046,534 1066,549 1079,549 1079,537 1098,537 1113,537 1098,549
1113,549 1066,573 1076,570 1087,573 1100,573 1113,573 1124,573 1137,573 1150,573 1166,573 1257,579 1270,579
1257,594 1270,594 1048,645 1063,645 1074,648 1087,648 1100,648 1113,648 1126,648 1137,648 1150,648 1161,648
1174,648 1150,633 1161,633 1174,633 1126,693 1126,708 1142,696 1142,708 1153,708 1190,738 1270,738`;

document.getElementById("drills").setAttribute("d", holes.trim().split(/\s+/).map(p => {
  const [x, y] = p.split(",");
  return `M${Math.round(600 + x / 2.613)} ${Math.round(600 + y / 3)}h.1`;
}).join(""));
```
